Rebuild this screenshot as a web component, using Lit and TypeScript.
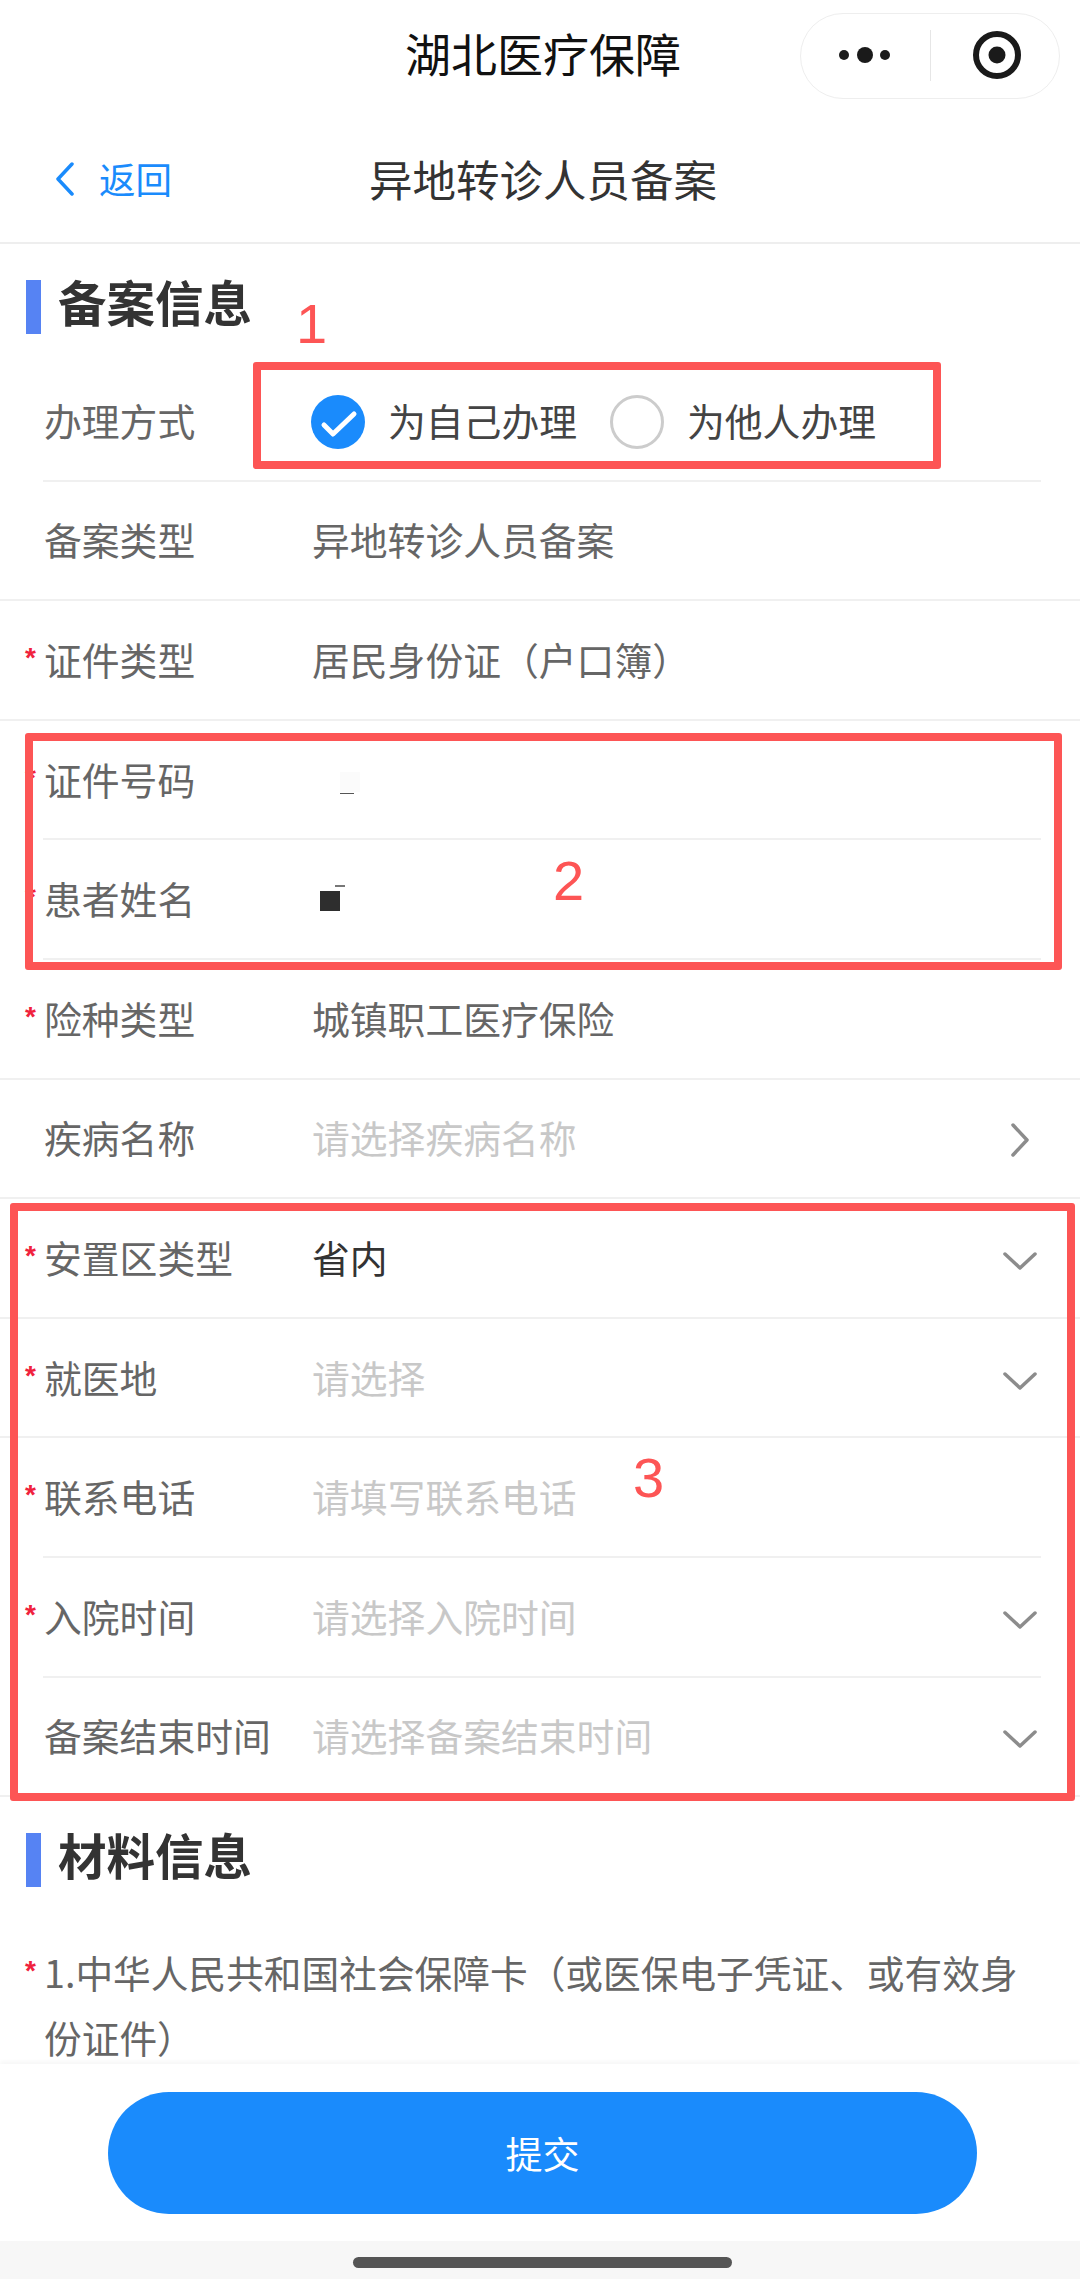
import { LitElement, html, css, svg } from "lit";
import { customElement } from "lit/decorators.js";

type Row = {
  label: string;
  req?: boolean;
  value?: string;
  kind?: "val" | "ph" | "dark";
  icon?: "down" | "right";
  full?: boolean;
  mark?: "white" | "dark";
};

const ROWS: Row[] = [
  { label: "备案类型", value: "异地转诊人员备案", full: true },
  { label: "证件类型", req: true, value: "居民身份证（户口簿）", full: true },
  { label: "证件号码", req: true, mark: "white" },
  { label: "患者姓名", req: true, mark: "dark" },
  { label: "险种类型", req: true, value: "城镇职工医疗保险", full: true },
  { label: "疾病名称", value: "请选择疾病名称", kind: "ph", icon: "right", full: true },
  { label: "安置区类型", req: true, value: "省内", kind: "dark", icon: "down", full: true },
  { label: "就医地", req: true, value: "请选择", kind: "ph", icon: "down", full: true },
  { label: "联系电话", req: true, value: "请填写联系电话", kind: "ph" },
  { label: "入院时间", req: true, value: "请选择入院时间", kind: "ph", icon: "down" },
  { label: "备案结束时间", value: "请选择备案结束时间", kind: "ph", icon: "down", full: true },
];

@customElement("app-root")
export class AppRoot extends LitElement {
  static styles = css`
    :host {
      display: block;
      width: 1080px;
      height: 2279px;
      position: relative;
      overflow: hidden;
      background: #fff;
      font-family: "Noto Sans CJK SC", "Liberation Sans", sans-serif;
      color: #666;
    }
    .page { display: flex; flex-direction: column; height: 2279px; }
    .wx {
      height: 110px; flex: none;
      display: grid; grid-template-columns: 1fr auto 1fr; align-items: center;
      padding-left: 6px;
    }
    .wx-title { grid-column: 2; font-size: 46px; line-height: 60px; color: #111; margin-bottom: 6px; }
    .capsule {
      grid-column: 3; justify-self: end; margin-right: 20px; margin-top: 1px;
      width: 260px; height: 86px; box-sizing: border-box;
      border: 1.5px solid #eee; border-radius: 43px; display: block;
    }
    .capsule svg { display: block; }
    .head {
      height: 134px; flex: none; box-sizing: border-box;
      border-bottom: 2px solid #eee;
      display: grid; grid-template-columns: 1fr auto 1fr; align-items: center;
      padding-left: 6px; padding-top: 6px;
    }
    .head-title { grid-column: 2; font-size: 43.5px; line-height: 60px; color: #333; }
    .back {
      grid-column: 1; grid-row: 1; display: flex; align-items: center; gap: 24px;
      padding-left: 49px; color: #1a8bfc; font-size: 36.5px; line-height: 50px;
    }
    .back svg { display: block; }
    .content { flex: 1; min-height: 0; overflow: hidden; }
    .sec {
      display: flex; align-items: center; gap: 17px;
      margin-left: 26px; height: 54px;
      font-size: 48.5px; font-weight: 700; color: #333; line-height: 54px;
    }
    .sec i { width: 15px; height: 54px; background: #5683f3; flex: none; }
    .sec span { position: relative; top: -6px; }
    .sec.one { margin-top: 36px; margin-bottom: 28px; }
    .sec.two { margin-top: 36px; margin-bottom: 52px; }
    .row {
      height: 119.6px; box-sizing: border-box; position: relative;
      display: flex; align-items: center; padding-left: 44px; padding-bottom: 5px;
      font-size: 37.8px;
    }
    .row::after {
      content: ""; position: absolute; left: 43px; right: 39px; bottom: 0;
      height: 2px; background: #f0f0f0;
    }
    .row.full::after { left: 0; right: 0; }
    .label { width: 268px; flex: none; color: #666; white-space: nowrap; position: relative; }
    .req {
      position: absolute; left: -19px; top: 7px; color: #f0223c;
      font-family: "Liberation Sans", sans-serif; font-weight: 700;
      font-size: 28px; line-height: 40px;
    }
    .val { color: #666; }
    .val.ph { color: #c8c8c8; }
    .val.dark { color: #333; }
    .ico { position: absolute; right: 42px; top: 50%; transform: translateY(calc(-50% + 2px)); display: block; }
    .ico.r { right: 50px; transform: translateY(calc(-50% + 1px)); }
    .radios { display: flex; align-items: center; color: #444; }
    .radios .lbl { margin-left: 23px; }
    .radios svg { display: block; }
    .radios .second { margin-left: 33px; margin-top: 5px; }
    .radios .first { margin-left: -1px; margin-top: 5px; }
    .markw {
      width: 20px; height: 20px; background: #fbfbfb; margin-left: 28px; margin-top: 7px; position: relative;
    }
    .markw::after {
      content: ""; position: absolute; left: 0; top: 21px; width: 14px; height: 1.5px; background: #555;
    }
    .markd {
      width: 20px; height: 20px; background: #2e2e2e; margin-left: 8px; margin-top: 7px; position: relative;
    }
    .markd::after {
      content: ""; position: absolute; left: 15px; top: -6px; width: 10px; height: 1.5px; background: #777;
    }
    .mat {
      position: relative; margin: 0 39px 0 44px;
      font-size: 37.7px; line-height: 65px; color: #666;
    }
    .mat .req { left: -19px; top: 12px; }
    .foot {
      height: 177px; flex: none; box-sizing: border-box; background: #fff;
      box-shadow: 0 -3px 4px rgba(0,0,0,0.03);
      padding: 28px 103px 27px 108px; position: relative;
    }
    .btn {
      height: 122px; border-radius: 61px; background: #1a8bfc; color: #fff;
      font-size: 37px; display: flex; align-items: center; justify-content: center;
    }
    .home {
      height: 38px; flex: none; background: #f7f7f7;
      display: flex; justify-content: center; padding-top: 16px; box-sizing: border-box;
      padding-left: 5px;
    }
    .home i { width: 379px; height: 11px; border-radius: 6px; background: #555; }
    .box {
      position: absolute; box-sizing: border-box; border: 8px solid #fd5555; border-radius: 3px;
      pointer-events: none;
    }
    .b1 { left: 253px; top: 362px; width: 688px; height: 107px; }
    .b2 { left: 25px; top: 733px; width: 1037px; height: 237px; }
    .b3 { left: 10px; top: 1203px; width: 1065px; height: 598px; }
    .num {
      position: absolute; color: #fd5555; font-family: "Liberation Sans", sans-serif;
      font-size: 56px; line-height: 56px;
    }
    .n1 { left: 296px; top: 296px; }
    .n2 { left: 553px; top: 853px; }
    .n3 { left: 633px; top: 1450px; }
  `;

  private chevron(kind?: "down" | "right") {
    if (kind === "down") {
      return html`<svg class="ico" width="36" height="20" viewBox="0 0 36 20" fill="none">
        <path d="M3 3 L18 17 L33 3" stroke="#8c8c8c" stroke-width="3.5" stroke-linecap="round" stroke-linejoin="round"/>
      </svg>`;
    }
    if (kind === "right") {
      return html`<svg class="ico r" width="20" height="36" viewBox="0 0 20 36" fill="none">
        <path d="M3 3 L17 18 L3 33" stroke="#8c8c8c" stroke-width="3.5" stroke-linecap="round" stroke-linejoin="round"/>
      </svg>`;
    }
    return null;
  }

  private row(r: Row) {
    return html`<div class="row ${r.full ? "full" : ""}">
      <div class="label">${r.req ? html`<span class="req">*</span>` : null}${r.label}</div>
      ${r.value ? html`<div class="val ${r.kind ?? ""}">${r.value}</div>` : null}
      ${r.mark === "white" ? html`<div class="markw"></div>` : null}
      ${r.mark === "dark" ? html`<div class="markd"></div>` : null}
      ${this.chevron(r.icon)}
    </div>`;
  }

  render() {
    return html`
      <div class="page">
        <div class="wx">
          <div class="wx-title">湖北医疗保障</div>
          <div class="capsule">
            <svg width="257" height="83" viewBox="801 14 257 83">
              ${svg`
                <circle cx="844" cy="55" r="5" fill="#1a1a1a"/>
                <circle cx="865" cy="55" r="8" fill="#1a1a1a"/>
                <circle cx="885" cy="55" r="5" fill="#1a1a1a"/>
                <rect x="930" y="30" width="1" height="51" fill="#e6e6e6"/>
                <circle cx="997" cy="55" r="21" fill="none" stroke="#1a1a1a" stroke-width="6"/>
                <circle cx="997" cy="55" r="8.5" fill="#1a1a1a"/>
              `}
            </svg>
          </div>
        </div>
        <div class="head">
          <div class="back">
            <svg width="20" height="34" viewBox="0 0 20 34" fill="none">
              <path d="M17 2 L3 17 L17 32" stroke="#1a8bfc" stroke-width="3.5" stroke-linecap="round" stroke-linejoin="round"/>
            </svg>
            <span>返回</span>
          </div>
          <div class="head-title">异地转诊人员备案</div>
        </div>
        <div class="content">
          <div class="sec one"><i></i><span>备案信息</span></div>
          <div class="row">
            <div class="label">办理方式</div>
            <div class="radios">
              <svg class="first" width="54" height="54" viewBox="0 0 54 54">
                <circle cx="27" cy="27" r="27" fill="#1a8bfc"/>
                <path d="M13 30 L22 39 L43 19" fill="none" stroke="#fff" stroke-width="5" stroke-linecap="round" stroke-linejoin="round"/>
              </svg>
              <span class="lbl">为自己办理</span>
              <svg class="second" width="54" height="54" viewBox="0 0 54 54">
                <circle cx="27" cy="27" r="25.5" fill="#fff" stroke="#cccccc" stroke-width="3"/>
              </svg>
              <span class="lbl">为他人办理</span>
            </div>
          </div>
          ${ROWS.map((r) => this.row(r))}
          <div class="sec two"><i></i><span>材料信息</span></div>
          <div class="mat"><span class="req">*</span>1.中华人民共和国社会保障卡（或医保电子凭证、或有效身份证件）</div>
        </div>
        <div class="foot"><div class="btn">提交</div></div>
        <div class="home"><i></i></div>
      </div>
      <div class="box b1"></div>
      <div class="box b2"></div>
      <div class="box b3"></div>
      <div class="num n1">1</div>
      <div class="num n2">2</div>
      <div class="num n3">3</div>
    `;
  }
}
